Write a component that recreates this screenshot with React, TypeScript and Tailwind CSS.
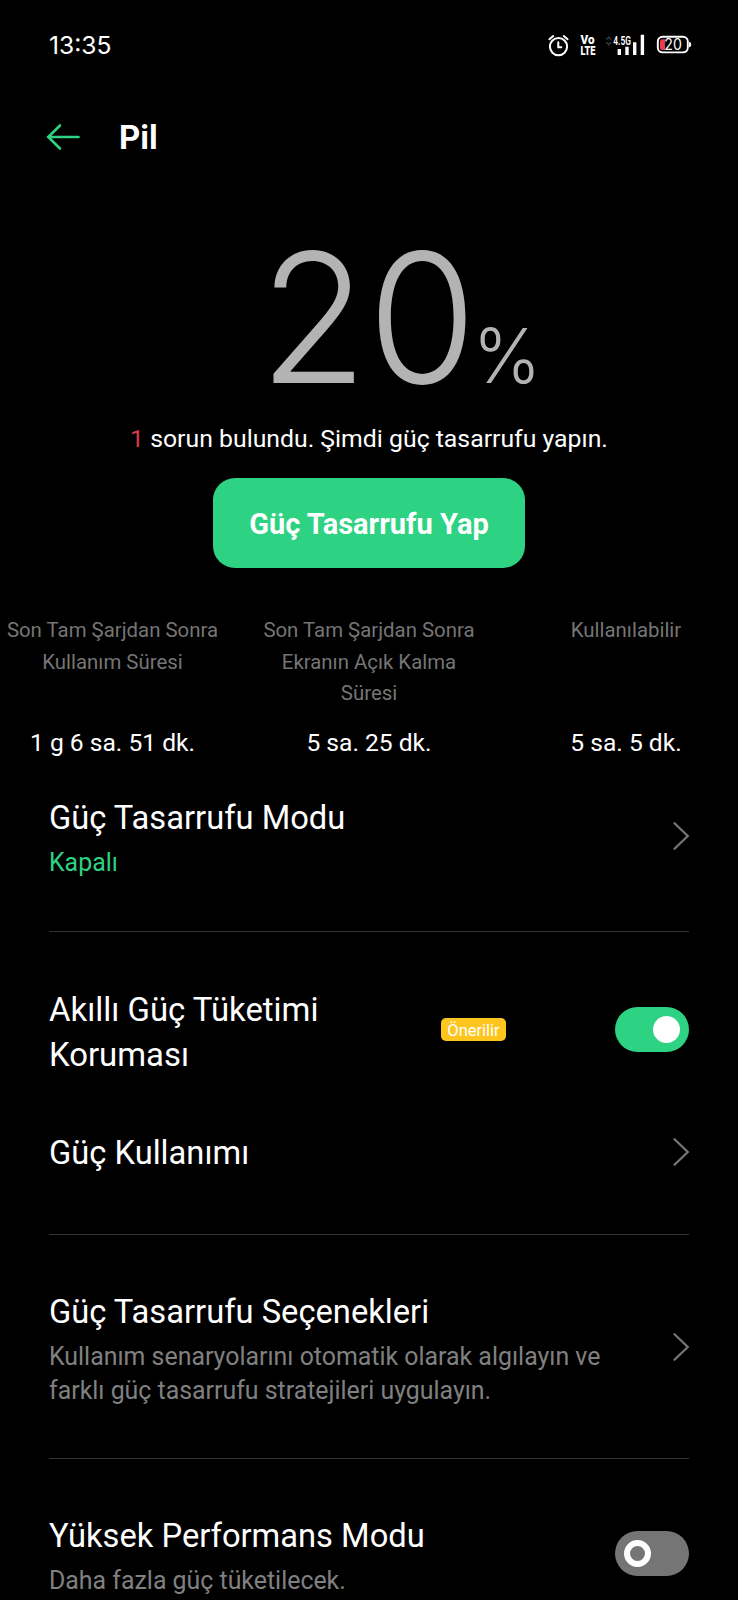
import type { ReactNode } from 'react';

function StatusIcons() {
  return (
    <svg width="150" height="30" viewBox="545 30 150 30" fill="none">
      {/* alarm */}
      <g stroke="#fff" strokeWidth="2" strokeLinecap="round">
        <circle cx="558.5" cy="46.6" r="8.6" />
        <path d="M558.3 42.3v4.9h3M549.4 39.2l3.8-3.1M567.6 39.2l-3.8-3.1" />
      </g>
      {/* VoLTE */}
      <g fill="#fff" fontFamily="Roboto, sans-serif" fontWeight="900" fontSize="12.2">
        <text x="580.5" y="44.1" textLength="14" lengthAdjust="spacingAndGlyphs">Vo</text>
        <text x="580.5" y="55.2" textLength="15" lengthAdjust="spacingAndGlyphs">LTE</text>
      </g>
      {/* signal */}
      <path d="M606.3 39.5l2.4-2.3 2.4 2.3M606.3 42.3l2.4 2.3 2.4-2.3" stroke="#3a3a3a" strokeWidth="1.5" />
      <text
        x="613.2"
        y="45.2"
        fill="#fff"
        fontFamily="Roboto, sans-serif"
        fontSize="12.7"
        fontWeight="600"
        textLength="17.8"
        lengthAdjust="spacingAndGlyphs"
      >
        4.5G
      </text>
      <path d="M617.6 49h3.4v6h-3.4zM625.3 46.7h3.4v8.3h-3.4zM633 42.3h3.4v12.7h-3.4zM640.7 34.8h3.4v20.2h-3.4z" fill="#fff" />
      {/* battery */}
      <rect x="657.8" y="36.8" width="30" height="15.6" rx="4.8" stroke="#fff" strokeWidth="1.9" />
      <path d="M689 41.8c1.8.5 2.2 1.5 2.2 2.8s-.4 2.3-2.2 2.8z" fill="#fff" />
      <path d="M665 39.3v10.6h-2.5a2.5 2.5 0 0 1-2.5-2.5v-5.6a2.5 2.5 0 0 1 2.5-2.5z" fill="#ef3b4e" />
      <text x="664.3" y="50.2" fill="#fff" fontFamily="Inter, sans-serif" fontSize="15.5" textLength="17.5" lengthAdjust="spacingAndGlyphs">
        20
      </text>
    </svg>
  );
}

function Chevron() {
  return (
    <svg className="-mr-px shrink-0" width="18" height="30" viewBox="0 0 18 30" fill="none">
      <path d="M2.5 2.2 15.8 15 2.5 27.8" stroke="#777" strokeWidth="2.2" strokeLinecap="round" />
    </svg>
  );
}

function Toggle({ on }: { on: boolean }) {
  if (on) {
    return (
      <div className="flex h-[45px] w-[74px] shrink-0 items-center justify-end rounded-full bg-[#2dd283] pr-[9px]">
        <div className="size-[27px] rounded-full bg-white" />
      </div>
    );
  }
  return (
    <div className="flex h-[45px] w-[74px] shrink-0 items-center rounded-full bg-[#757575] pl-[9px]">
      <div className="size-[27px] rounded-full border-[6px] border-white" />
    </div>
  );
}

function Row({ title, sub, green, children }: { title: string; sub?: string; green?: boolean; children: ReactNode }) {
  return (
    <div className="flex items-center justify-between">
      <div className="max-w-[560px]">
        <h2 className="text-[32.7px] leading-[44px]">{title}</h2>
        {sub && (
          <p className={`mt-1.5 text-[24.9px] leading-[33.5px] ${green ? 'text-[#2dd283]' : 'text-[#808080]'}`}>{sub}</p>
        )}
      </div>
      <div className={sub ? '-mt-1' : '-mt-0.5'}>{children}</div>
    </div>
  );
}

function Stat({ label, value, className }: { label: string; value: string; className: string }) {
  return (
    <div className={`flex flex-col items-center text-center ${className}`}>
      <p className="h-[112px] text-[20.4px] leading-[31.5px] text-[#757575]">{label}</p>
      <p className="text-[24.6px] leading-[32px] whitespace-nowrap">{value}</p>
    </div>
  );
}

export default function App() {
  return (
    <div className="h-[1600px] w-[738px] overflow-hidden bg-black font-[Roboto,sans-serif] text-white">
      <div className="flex h-[90px] items-center justify-between pr-[43px] pl-[49px]">
        <span className="font-[Inter,sans-serif] text-[24.6px] leading-none">13:35</span>
        <StatusIcons />
      </div>

      <header className="flex h-[94px] items-center gap-[38px] pl-[46px]">
        <svg width="35" height="28" viewBox="0 0 35 28" fill="none" stroke="#2dd283" strokeWidth="2.6" strokeLinecap="round">
          <path d="M2.5 14H32.5M14 2.5 2.2 14 14 25.5" />
        </svg>
        <h1 className="pt-px text-[33px] leading-none font-bold">Pil</h1>
      </header>

      <section className="mt-px flex flex-col items-center">
        <div className="flex h-[230px] w-full origin-left scale-x-[.975] items-baseline pl-[266px] font-[Inter,sans-serif] font-light text-[#b3b3b3]">
          <span className="text-[181px] leading-[266px]">20</span>
          <span className="-ml-1 text-[75px]">%</span>
        </div>
        <p className="mt-2 text-[24.8px] leading-[32px] whitespace-nowrap">
          <span className="text-[#d93a4a]">1</span> sorun bulundu. Şimdi güç tasarrufu yapın.
        </p>
        <button className="mt-[23px] h-[90px] w-[312px] rounded-[22px] bg-[#2dd283] pt-1 text-[29px] font-bold">
          Güç Tasarrufu Yap
        </button>
      </section>

      <section className="mt-[47px] flex justify-between">
        <Stat className="w-[225px]" label="Son Tam Şarjdan Sonra Kullanım Süresi" value="1 g 6 sa. 51 dk." />
        <Stat className="w-[225px]" label="Son Tam Şarjdan Sonra Ekranın Açık Kalma Süresi" value="5 sa. 25 dk." />
        <Stat className="w-[225px] pl-[1px]" label="Kullanılabilir" value="5 sa. 5 dk." />
      </section>

      <main className="px-[49px]">
        <div className="mt-[37px] h-[135px]">
          <Row title="Güç Tasarrufu Modu" sub="Kapalı" green>
            <Chevron />
          </Row>
        </div>
        <div className="h-px bg-[#333]" />

        <div className="mt-[55px] flex">
          <h2 className="w-[392px] pr-10 text-[32.9px] leading-[45px]">Akıllı Güç Tüketimi Koruması</h2>
          <span className="mt-[31px] h-[23px] w-[65px] rounded-[5px] bg-[#fec51f] text-center text-[16.5px] leading-[25px]">
            Önerilir
          </span>
          <div className="mt-5 ml-auto">
            <Toggle on />
          </div>
        </div>

        <div className="mt-[54px] h-[103px]">
          <Row title="Güç Kullanımı">
            <Chevron />
          </Row>
        </div>
        <div className="h-px bg-[#333]" />

        <div className="mt-[55px] h-[168px]">
          <Row
            title="Güç Tasarrufu Seçenekleri"
            sub="Kullanım senaryolarını otomatik olarak algılayın ve farklı güç tasarrufu stratejileri uygulayın."
          >
            <Chevron />
          </Row>
        </div>
        <div className="h-px bg-[#333]" />

        <div className="mt-[55px]">
          <Row title="Yüksek Performans Modu" sub="Daha fazla güç tüketilecek.">
            <Toggle on={false} />
          </Row>
        </div>
      </main>
    </div>
  );
}
